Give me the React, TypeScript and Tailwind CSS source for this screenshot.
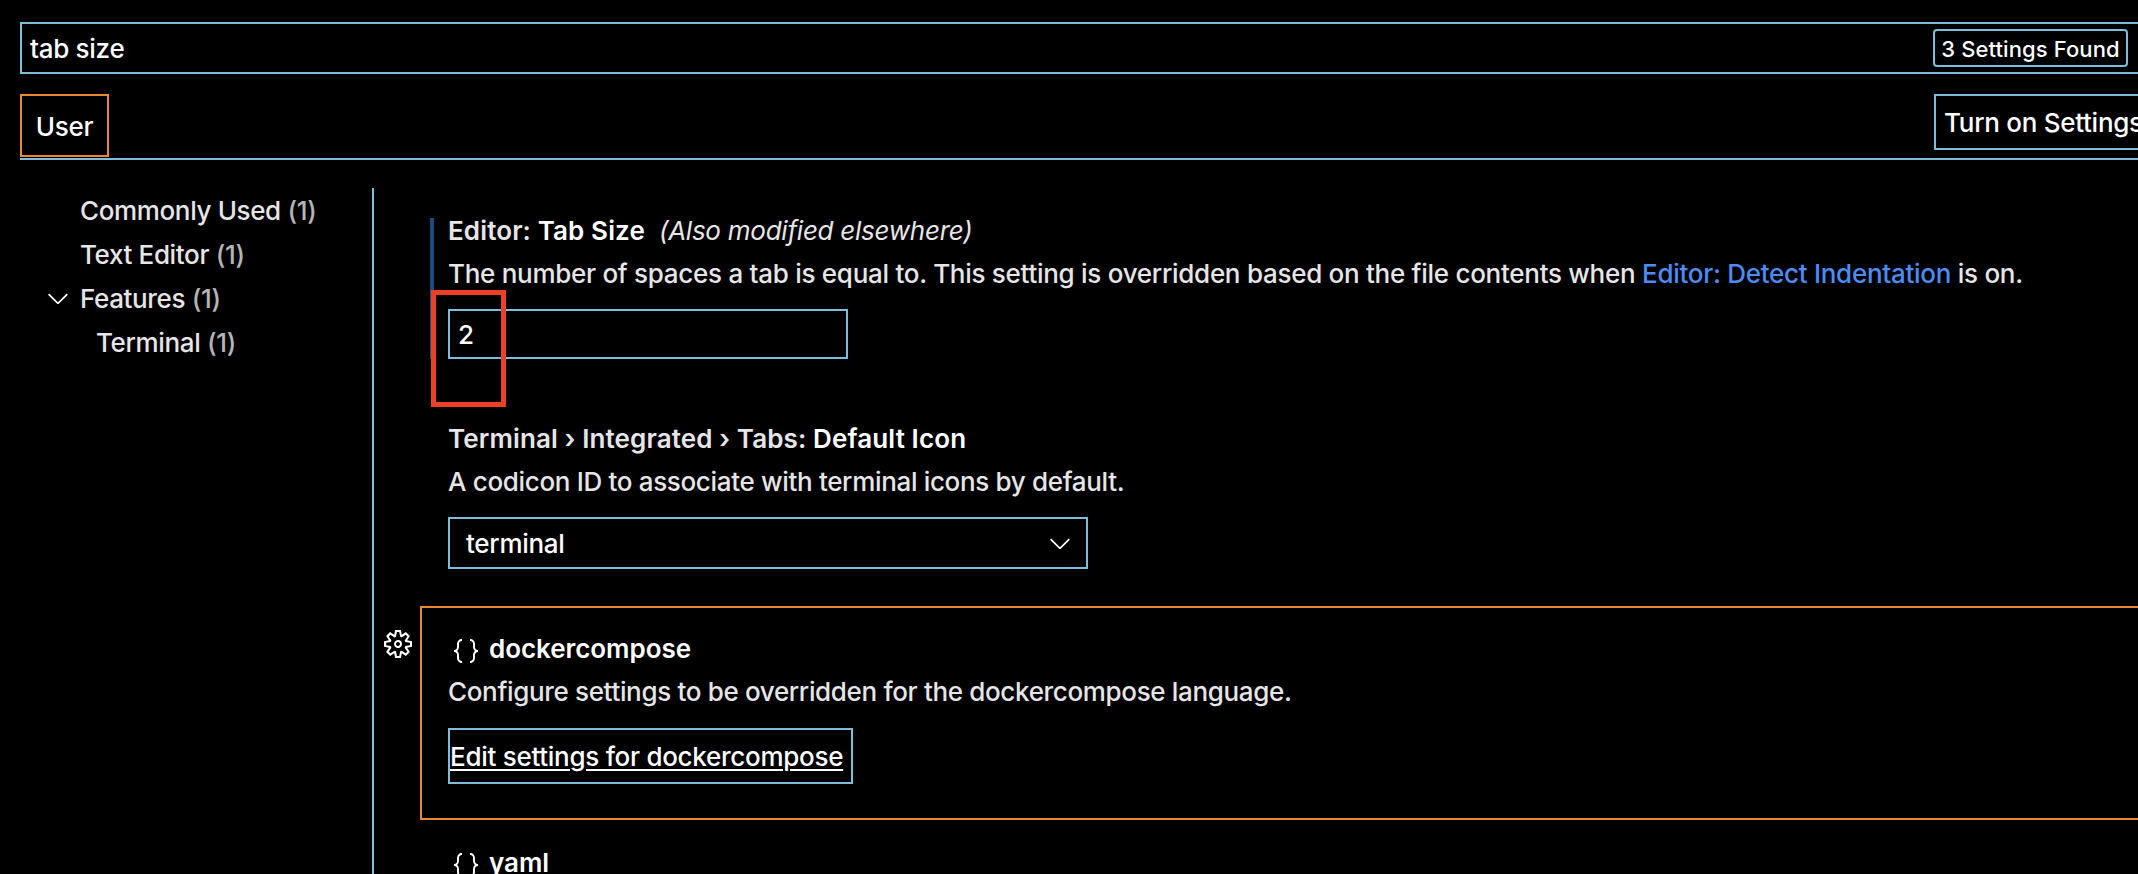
import React from 'react';
import { VscChevronDown, VscJson, VscSettingsGear } from 'react-icons/vsc';

interface TocEntry {
  label: string;
  count: number;
  expanded?: boolean;
  nested?: boolean;
}

const tocEntries: TocEntry[] = [
  { label: 'Commonly Used', count: 1 },
  { label: 'Text Editor', count: 1 },
  { label: 'Features', count: 1, expanded: true },
  { label: 'Terminal', count: 1, nested: true },
];

const SearchHeader: React.FC = () => (
  <div className="ml-5 mt-[22px] flex h-[52px] w-[2140px] shrink-0 items-center justify-between border-2 border-[#7cbedb] pl-2">
    <span className="pt-0.5 text-white">tab size</span>
    <span className="mr-[30px] flex h-[38px] w-[195px] items-center justify-center rounded-[4px] border-2 border-[#7cbedb] pt-0.5 text-[22px] tracking-[0.1px] text-white">
      3 Settings Found
    </span>
  </div>
);

const TargetTabs: React.FC = () => (
  <div className="ml-5 mt-5 flex h-[66px] w-[2140px] shrink-0 items-start justify-between border-b-2 border-[#7cbedb] text-white">
    <div className="flex h-[63px] w-[89px] items-center justify-center border-2 border-[#e98a32] pt-0.5">
      <span>User</span>
    </div>
    <button className="mr-[-74px] flex h-14 w-[300px] items-center whitespace-nowrap border-2 border-[#7cbedb] pl-2 pt-0.5">
      Turn on Settings Sync
    </button>
  </div>
);

const Toc: React.FC = () => (
  <nav className="w-[374px] shrink-0 border-r-2 border-[#7cbedb]">
    {tocEntries.map((entry) => (
      <div key={entry.label} className="flex h-11 items-center">
        <div className={entry.nested ? 'w-24' : 'w-20'}>
          {entry.expanded && <VscChevronDown className="ml-[42px] size-8 text-white" />}
        </div>
        <span className="whitespace-pre pt-0.5 tracking-[-0.36px] text-[#e6e6e6]">
          {entry.label} <span className="text-[#b4b4b4]">({entry.count})</span>
        </span>
      </div>
    ))}
  </nav>
);

const LanguageTitle: React.FC<{ name: string }> = ({ name }) => (
  <div className="flex h-[42px] items-center">
    <VscJson className="ml-0.5 mt-1 size-8 text-white" />
    <span className="ml-[7px] font-semibold tracking-[-0.05px] text-white">{name}</span>
  </div>
);

const App: React.FC = () => {
  return (
    <div className="flex h-[874px] w-full flex-col overflow-hidden bg-black font-['Inter',sans-serif] text-[26px] font-[450] leading-[42px] tracking-[-0.28px] text-[#e6e6e6]">
      <SearchHeader />
      <TargetTabs />

      <div className="mt-7 flex h-[686px] shrink-0">
        <Toc />

        <main className="min-w-0 flex-1 pt-[30px]">
          {/* Editor: Tab Size */}
          <section className="relative ml-14 flex h-[141px] flex-col border-l-4 border-[#1d4a7c] pl-3.5">
            <h3 className="-mt-2 h-[43px] whitespace-pre font-semibold tracking-[0.12px]">
              Editor: <span className="text-white">Tab Size</span>
              <span className="ml-3.5 font-[450] italic tracking-[-0.25px]">(Also modified elsewhere)</span>
            </h3>
            <p className="h-14 whitespace-nowrap">
              The number of spaces a tab is equal to. This setting is overridden based on the file contents when{' '}
              <a className="text-[#4b8cf5]">Editor: Detect Indentation</a> is on.
            </p>
            <div className="flex h-[50px] w-[400px] items-center border-2 border-[#7cbedb] pl-2 pt-0.5 text-white">2</div>
            {/* red highlight over the value */}
            <div className="absolute -left-[3px] top-[72px] h-[117px] w-[75px] border-[5px] border-[#ee4025]" />
          </section>

          {/* Terminal icon */}
          <section className="ml-[74px] h-[247px] pt-[59px]">
            <h3 className="h-[43px] whitespace-nowrap font-semibold tracking-[0.12px]">
              Terminal › Integrated › Tabs: <span className="text-white">Default Icon</span>
            </h3>
            <p className="h-14 tracking-[-0.33px]">A codicon ID to associate with terminal icons by default.</p>
            <div className="flex h-[52px] w-[640px] items-center justify-between border-2 border-[#7cbedb] pl-4 pr-2.5 text-white">
              <span className="pt-0.5">terminal</span>
              <VscChevronDown className="size-8" />
            </div>
          </section>

          {/* dockercompose */}
          <div className="flex h-[214px]">
            <div className="w-[46px] pl-2.5 pt-6">
              <VscSettingsGear className="size-7 text-white" />
            </div>
            <section className="flex-1 border-2 border-r-0 border-[#e98a32] pl-[26px] pt-5">
              <LanguageTitle name="dockercompose" />
              <p className="h-[58px] pt-px tracking-[-0.34px]">
                Configure settings to be overridden for the dockercompose language.
              </p>
              <button className="flex h-14 w-[405px] items-center whitespace-nowrap border-2 border-[#7cbedb] pt-0.5 text-white underline decoration-2 underline-offset-[3px]">
                Edit settings for dockercompose
              </button>
            </section>
          </div>

          <section className="ml-[74px] pt-[22px]">
            <LanguageTitle name="yaml" />
          </section>
        </main>
      </div>
    </div>
  );
};

export default App;
